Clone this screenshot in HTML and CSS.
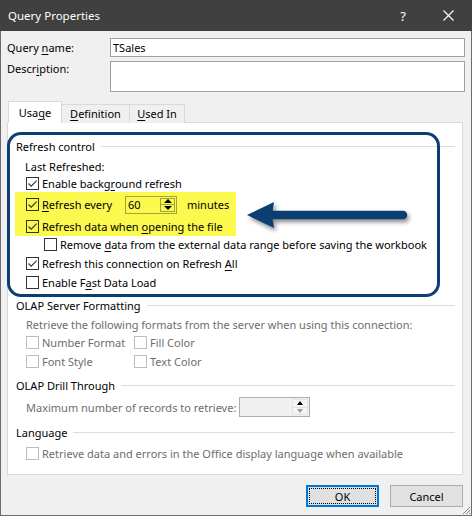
FILE: index.html
```html
<!DOCTYPE html>
<html>
<head>
<meta charset="utf-8">
<link rel="stylesheet" href="styles.css">
</head>
<body>
<div class="dialog">
  <div class="titlebar">
    <span class="title">Query Properties</span>
    <span class="help">?</span>
    <svg class="close" width="11" height="11" viewBox="0 0 11 11"><path d="M0.5 0.5L10.5 10.5M10.5 0.5L0.5 10.5" stroke="#ffffff" stroke-width="1.1" fill="none"/></svg>
  </div>
  <div class="body">
    <div class="field-row">
      <span class="flabel">Query <u>n</u>ame:</span>
      <div class="textbox">TSales</div>
    </div>
    <div class="field-row desc">
      <span class="flabel desc-label">Descr<u>i</u>ption:</span>
      <div class="textbox multi"></div>
    </div>
    <div class="tabs">
      <div class="tab active">Usa<u>g</u>e</div>
      <div class="tab t-def"><u>D</u>efinition</div>
      <div class="tab t-used"><u>U</u>sed In</div>
    </div>
    <div class="panel">
      <div class="group">
        <div class="ghead"><span>Refresh control</span><i></i></div>
        <div class="row last"><span>Last Refreshed:</span></div>
        <div class="row r-bg"><span class="cb on"><svg viewBox="0 0 11 11" width="11" height="11"><path d="M1.5 5.5L4.2 8.2L9.6 2.6" stroke="#333" stroke-width="1.1" fill="none"/></svg></span><span>Enable backg<u>r</u>ound refresh</span></div>
        <div class="hilite">
          <div class="hrow r-every"><span class="cb on"><svg viewBox="0 0 11 11" width="11" height="11"><path d="M1.5 5.5L4.2 8.2L9.6 2.6" stroke="#333" stroke-width="1.1" fill="none"/></svg></span><span class="every-label"><u>R</u>efresh every</span>
            <span class="spin"><span class="spin-val">60</span><span class="spin-btns"><span class="sb"><i class="up"></i></span><span class="sb"><i class="down"></i></span></span></span>
            <span class="minutes">minutes</span>
          </div>
          <div class="hrow r-data"><span class="cb on"><svg viewBox="0 0 11 11" width="11" height="11"><path d="M1.5 5.5L4.2 8.2L9.6 2.6" stroke="#333" stroke-width="1.1" fill="none"/></svg></span><span>Refresh data when <u>o</u>pening the file</span></div>
        </div>
        <div class="row r-remove"><span class="cb"></span><span>Remove <u>d</u>ata from the external data range before saving the workbook</span></div>
        <div class="row r-conn"><span class="cb on"><svg viewBox="0 0 11 11" width="11" height="11"><path d="M1.5 5.5L4.2 8.2L9.6 2.6" stroke="#333" stroke-width="1.1" fill="none"/></svg></span><span>Refresh this connection on Refresh <u>A</u>ll</span></div>
        <div class="row r-fast"><span class="cb"></span><span>Enable F<u>a</u>st Data Load</span></div>
      </div>
      <div class="group g-olap">
        <div class="ghead"><span>OLAP Server Formatting</span><i></i></div>
        <div class="row dis r-retr"><span>Retrieve the following formats from the server when using this connection:</span></div>
        <div class="row dis r-num"><span class="col"><span class="cb off"></span><span>Number Format</span></span><span class="col"><span class="cb off"></span><span>Fill Color</span></span></div>
        <div class="row dis r-font"><span class="col"><span class="cb off"></span><span>Font Style</span></span><span class="col"><span class="cb off"></span><span>Text Color</span></span></div>
      </div>
      <div class="group g-drill">
        <div class="ghead"><span>OLAP Drill Through</span><i></i></div>
        <div class="row dis r-max"><span class="max-label">Maximum number of records to retrieve:</span>
          <span class="spin2"><span class="spin2-val"></span><span class="spin2-btns"><span class="sb2"><i class="up"></i></span><span class="sb2"><i class="down gray"></i></span></span></span>
        </div>
      </div>
      <div class="group g-lang">
        <div class="ghead"><span>Language</span><i></i></div>
        <div class="row dis r-lang"><span class="cb off"></span><span>Retrieve data and errors in the Office display language when available</span></div>
      </div>
    </div>
    <div class="buttons">
      <div class="btn default">OK</div>
      <div class="btn">Cancel</div>
    </div>
  </div>
  <div class="callout"></div>
  <svg class="arrow" width="180" height="40" viewBox="0 0 180 40"><path d="M30 20H163" stroke="#0b3e73" stroke-width="8.5" stroke-linecap="round" fill="none"/><path d="M7 20L34 7L32 20L34 33Z" fill="#0b3e73"/></svg>
  <svg class="grip" width="10" height="10" viewBox="0 0 10 10"><path d="M9 2L2 9M9 5L5 9M9 8L8 9" stroke="#8a8a8a" stroke-width="1" fill="none"/></svg>
</div>
</body>
</html>
```
FILE: styles.css
```css
* { box-sizing: border-box; }
html, body { margin: 0; padding: 0; }
body {
  width: 472px;
  height: 516px;
  overflow: hidden;
  background: #f0f0f0;
  font-family: "Noto Sans", "Open Sans", sans-serif;
  font-size: 11px;
  color: #000;
}
u { text-decoration: underline; text-underline-offset: 2px; }
.dialog {
  position: relative;
  width: 472px;
  height: 516px;
  background: #f0f0f0;
  border: 1px solid #6b6b6b;
  border-top: none;
}
.titlebar {
  height: 31px;
  background: #404040;
  color: #fff;
  display: flex;
  align-items: center;
  padding-left: 8px;
  padding-right: 18px;
  margin: 0 -1px;
}
.title { flex: 1; font-size: 11.5px; }
.help { width: 12px; text-align: center; margin-right: 34px; font-size: 13px; }
.close { display: block; }

.body { padding: 7px 6px 0 6px; }
.field-row { display: flex; align-items: flex-start; }
.flabel { width: 103px; line-height: 19px; }
.desc { margin-top: 4px; }
.desc-label { line-height: 16px; }
.textbox {
  width: 355px;
  height: 19px;
  background: #fff;
  border: 1px solid #a0a0a0;
  padding-left: 2px;
  line-height: 17px;
}
.textbox.multi { height: 31px; }

.tabs {
  display: flex;
  align-items: flex-end;
  height: 22px;
  margin: 9px 0 -1px 1px;
  position: relative;
  z-index: 1;
}
.tab {
  height: 19px;
  border: 1px solid #d9d9d9;
  border-bottom: none;
  background: #f0f0f0;
  text-align: center;
  line-height: 18px;
  padding-top: 0;
}
.tab.active { width: 54px; height: 22px; background: #fff; padding-top: 2px; }
.t-def { width: 68px; border-left: none; }
.t-used { width: 55px; border-left: none; }

.panel {
  width: 456px;
  height: 353px;
  background: #fff;
  border: 1px solid #d9d9d9;
  padding-top: 13px;
}
.group { padding: 0 7px 0 8px; }
.ghead { display: flex; align-items: center; height: 20px; }
.ghead i { flex: 1; height: 1px; background: #dcdcdc; margin-left: 6px; }
.row { display: flex; align-items: center; height: 20px; margin-left: 10px; white-space: nowrap; }
.last { margin-left: 9px; }
.r-bg { height: 14px; }
.r-remove { height: 16px; margin-left: 28px; }
.r-conn { height: 22px; }
.r-fast { height: 16px; }
.cb {
  width: 13px;
  height: 13px;
  border: 1px solid #333;
  background: #fff;
  margin-right: 3px;
  flex: none;
  display: flex;
  align-items: center;
  justify-content: center;
}
.cb svg { display: block; }
.cb.off { border-color: #bcbcbc; }

.hilite {
  background: #fbf84e;
  width: 221px;
  margin: 2px 0 0 -1px;
  padding: 0 0 1px 11px;
}
.hrow { display: flex; align-items: center; white-space: nowrap; }
.hilite .cb { background: transparent; border-color: #34331a; }
.r-every { height: 25px; }
.r-data { height: 18px; }
.every-label { width: 83px; }
.spin {
  width: 52px;
  height: 18px;
  border: 1px solid #a6a33c;
  display: flex;
}
.spin-val { flex: 1; padding-left: 2px; line-height: 16px; }
.spin-btns { width: 16px; display: flex; flex-direction: column; padding: 1px 1px 1px 0; }
.sb {
  flex: 1;
  border: 1px solid #a6a33c;
  display: flex;
  align-items: center;
  justify-content: center;
}
.sb + .sb { border-top: none; }
i.up { width: 0; height: 0; border-left: 4px solid transparent; border-right: 4px solid transparent; border-bottom: 4px solid #000; }
i.down { width: 0; height: 0; border-left: 4px solid transparent; border-right: 4px solid transparent; border-top: 4px solid #000; }
.minutes { margin-left: 10px; }

.g-olap { margin-top: 5px; }
.dis { color: #6d6d6d; }
.r-retr { height: 19px; }
.r-num { height: 16px; margin-left: 10px; }
.r-font { height: 22px; }
.col { display: flex; align-items: center; }
.col:first-child { width: 108px; }

.g-drill { margin-top: 3px; }
.r-max { height: 24px; }
.max-label { width: 213px; }
.spin2 {
  width: 71px;
  height: 20px;
  border: 1px solid #adadad;
  background: #f0f0f0;
  display: flex;
}
.spin2-val { flex: 1; }
.spin2-btns { width: 17px; display: flex; flex-direction: column; padding: 1px 1px 1px 0; }
.sb2 { flex: 1; display: flex; align-items: center; justify-content: center; background: #f4f4f4; border: 1px solid #e3e3e3; }
.sb2 + .sb2 { border-top: none; }
.sb2 i.up, .sb2 i.down { border-left-width: 3px; border-right-width: 3px; }
i.down.gray { border-top-color: #9a9a9a; }

.g-lang { margin-top: 3px; }
.r-lang { height: 22px; }

.buttons {
  display: flex;
  justify-content: flex-end;
  gap: 11px;
  margin-top: 10px;
  padding-right: 2px;
}
.btn {
  width: 73px;
  height: 22px;
  background: #e1e1e1;
  border: 1px solid #adadad;
  display: flex;
  align-items: center;
  justify-content: center;
}
.btn.default {
  border: 2px solid #0078d7;
  outline: 1px dotted #000;
  outline-offset: -4px;
}

.callout {
  position: absolute;
  left: 6px;
  top: 132px;
  width: 433px;
  height: 165px;
  border: 3px solid #0b3e73;
  border-radius: 14px;
  pointer-events: none;
}
.arrow {
  position: absolute;
  left: 239px;
  top: 195px;
  filter: drop-shadow(2px 3px 2px rgba(0,0,0,0.45));
}
.grip { position: absolute; right: 0; bottom: 0; }
```
